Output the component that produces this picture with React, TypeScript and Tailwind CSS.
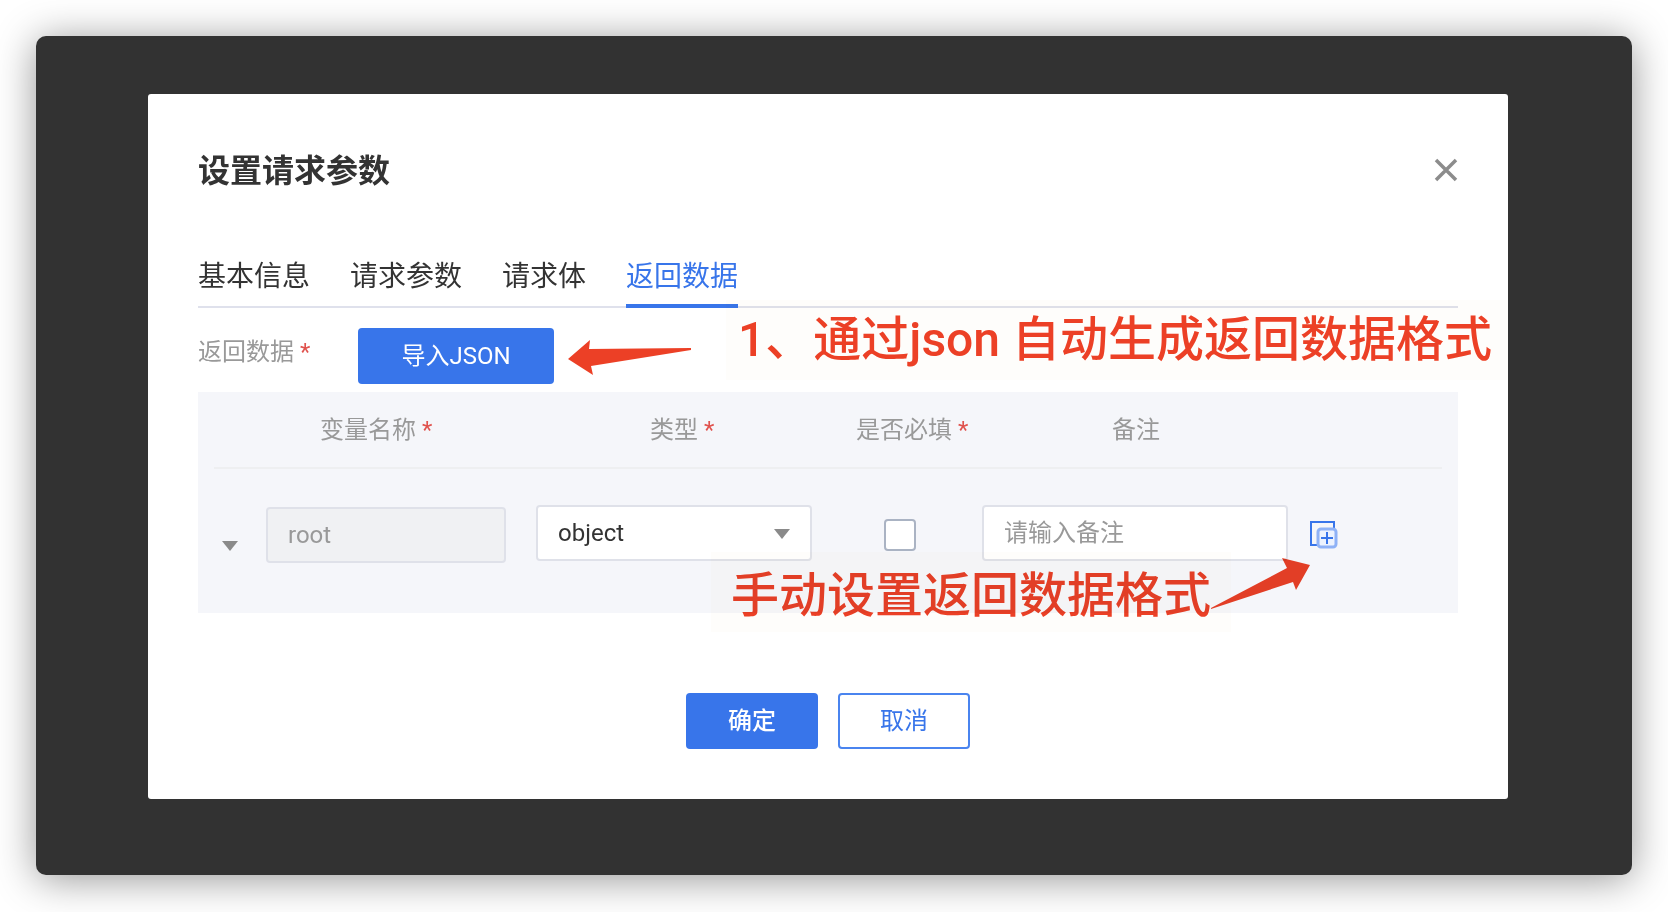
import React, { useState } from "react";

const tabs = ["基本信息", "请求参数", "请求体", "返回数据"];

const Star = () => <span className="text-[#e0524d]">*</span>;

const Caret = ({ className = "" }) => (
    <svg viewBox="0 0 16 10" className={"w-4 h-[10px] fill-[#8a8a8a] " + className}>
        <path d="M0 0h16L8 10z" />
    </svg>
);

const App = () => {
    const [activeTab, setActiveTab] = useState("返回数据");
    const [type, setType] = useState("object");
    const [required, setRequired] = useState(false);
    const [remark, setRemark] = useState("");

    return (
        <div className="min-h-screen bg-white p-9 font-['Roboto','Noto_Sans_CJK_SC',sans-serif]">
            <div className="rounded-[10px] bg-[#323232] pt-[58px] pb-[76px] pl-28 pr-[124px] shadow-[0_4px_40px_rgba(0,0,0,0.42)]">
                <div role="dialog" aria-labelledby="title" className="relative rounded-[3px] bg-white px-[50px] pt-[53px] pb-[50px]">
                    <div className="flex items-center justify-between">
                        <h2 id="title" className="text-[32px] leading-12 font-bold text-[#333]">
                            设置请求参数
                        </h2>
                        <button aria-label="关闭" className="pb-[2px]">
                            <svg viewBox="0 0 24 24" className="w-6 h-6 stroke-[#8c8c8c] stroke-[3.5]">
                                <path d="M2 2l20 20M22 2L2 22" />
                            </svg>
                        </button>
                    </div>

                    <div role="tablist" className="mt-12 flex gap-10 border-b-2 border-[#dfe1ec]">
                        {tabs.map((tab) => (
                            <button
                                key={tab}
                                role="tab"
                                aria-selected={activeTab === tab}
                                onClick={() => setActiveTab(tab)}
                                className={
                                    "-mb-[2px] h-[65px] border-b-4 pt-[6px] text-[28px] " +
                                    (activeTab === tab
                                        ? "border-[#3875ea] text-[#3875ea]"
                                        : "border-transparent text-[#333]")
                                }
                            >
                                {tab}
                            </button>
                        ))}
                    </div>

                    <div className="relative mt-5 flex items-start">
                        <div className="w-40 pt-1 text-2xl leading-10 text-[#999]">
                            返回数据 <Star />
                        </div>
                        <button className="h-14 w-[196px] rounded bg-[#3875ea] text-2xl text-white">
                            导入JSON
                        </button>
                        {/* note for the import button */}
                        <svg viewBox="0 0 124 36" className="ml-[14px] mt-3 w-[124px] h-9 fill-[#ec4026]">
                            <path d="M0 19L22 0L21 9L123 8L123 10L23 26L25 35Z" />
                        </svg>
                        <div className="pointer-events-none absolute -top-7 -right-[50px] bg-[#fefdfb] py-3 pr-4 pl-3 whitespace-nowrap text-5xl leading-14 font-medium text-[#ec4026] mix-blend-multiply">
                            1、通过json 自动生成返回数据格式
                        </div>
                    </div>

                    <div className="relative mt-2 bg-[#f5f6fa] px-4 pb-[50px]">
                        <table className="w-full table-fixed text-2xl text-[#999]">
                            <colgroup>
                                <col className="w-[52px]" />
                                <col className="w-[270px]" />
                                <col className="w-[306px]" />
                                <col className="w-[140px]" />
                                <col className="w-[328px]" />
                                <col />
                            </colgroup>
                            <thead>
                                <tr className="h-[76px] border-b-2 border-[#eeeff1]">
                                    <th></th>
                                    <th className="pl-[54px] text-left font-normal">变量名称 <Star /></th>
                                    <th className="pl-[114px] text-left font-normal">类型 <Star /></th>
                                    <th className="pl-[14px] text-left font-normal whitespace-nowrap">是否必填 <Star /></th>
                                    <th className="pl-[130px] text-left font-normal">备注</th>
                                    <th></th>
                                </tr>
                            </thead>
                            <tbody>
                                <tr className="align-top">
                                    <td className="pt-[38px] pl-2">
                                        <button aria-label="展开" className="block pt-[34px]">
                                            <Caret />
                                        </button>
                                    </td>
                                    <td className="pt-[38px]">
                                        <input
                                            aria-label="变量名称"
                                            disabled
                                            value="root"
                                            className="block h-14 w-60 rounded border-2 border-[#dfe1e9] bg-[#f0f1f3] px-5 text-[#999]"
                                        />
                                    </td>
                                    <td className="pt-9">
                                        <div className="relative w-[276px]">
                                            <select
                                                aria-label="类型"
                                                value={type}
                                                onChange={(e) => setType(e.target.value)}
                                                className="block h-14 w-full appearance-none rounded border-2 border-[#dfe1e9] bg-white px-5 text-[#333]"
                                            >
                                                <option value="object">object</option>
                                                <option value="array">array</option>
                                                <option value="string">string</option>
                                            </select>
                                            <Caret className="pointer-events-none absolute right-[22px] top-6" />
                                        </div>
                                    </td>
                                    <td className="pt-[50px] pl-[42px]">
                                        <input
                                            type="checkbox"
                                            aria-label="是否必填"
                                            checked={required}
                                            onChange={(e) => setRequired(e.target.checked)}
                                            className="block h-8 w-8 appearance-none rounded border-2 border-[#aab3c3] bg-white checked:bg-[#3875ea]"
                                        />
                                    </td>
                                    <td className="pt-9">
                                        <input
                                            aria-label="备注"
                                            placeholder="请输入备注"
                                            value={remark}
                                            onChange={(e) => setRemark(e.target.value)}
                                            className="block h-14 w-[306px] rounded border-2 border-[#dfe1e9] bg-white px-5 text-[#333] placeholder:text-[#999]"
                                        />
                                    </td>
                                    <td className="pt-[52px]">
                                        <button aria-label="添加" className="block">
                                            <svg viewBox="0 0 28 28" className="w-7 h-7 fill-none stroke-2">
                                                <path d="M24 7V1H1v23h6" className="stroke-[#3875ea]" />
                                                <rect x="8" y="8" width="18" height="18" rx="3" className="fill-[#edf3fe] stroke-[#8fb2f6] stroke-3" />
                                                <path d="M17 11v12M11 17h12" className="stroke-[#3875ea]" />
                                            </svg>
                                        </button>
                                    </td>
                                </tr>
                            </tbody>
                        </table>
                        {/* note for the add button */}
                        <div className="pointer-events-none absolute top-40 right-[147px] flex items-start text-[#ec4026] mix-blend-multiply">
                            <span className="bg-[#fefdfb] pt-4 pr-5 pb-2 pl-5 whitespace-nowrap text-5xl leading-14 font-medium">手动设置返回数据格式</span>
                            <svg viewBox="0 0 100 52" className="-ml-5 mt-[6px] w-[100px] h-[52px] fill-current">
                                <path d="M0 50L76 10L71 0L99 7L85 32L82 24L0 51Z" />
                            </svg>
                        </div>
                    </div>

                    <div className="mt-20 flex justify-center gap-5 text-2xl">
                        <button className="h-14 w-[132px] rounded bg-[#3875ea] font-medium text-white">确定</button>
                        <button className="h-14 w-[132px] rounded border-2 border-[#4a84ef] bg-white text-[#3875ea]">取消</button>
                    </div>
                </div>
            </div>
        </div>
    );
};

export default App;
